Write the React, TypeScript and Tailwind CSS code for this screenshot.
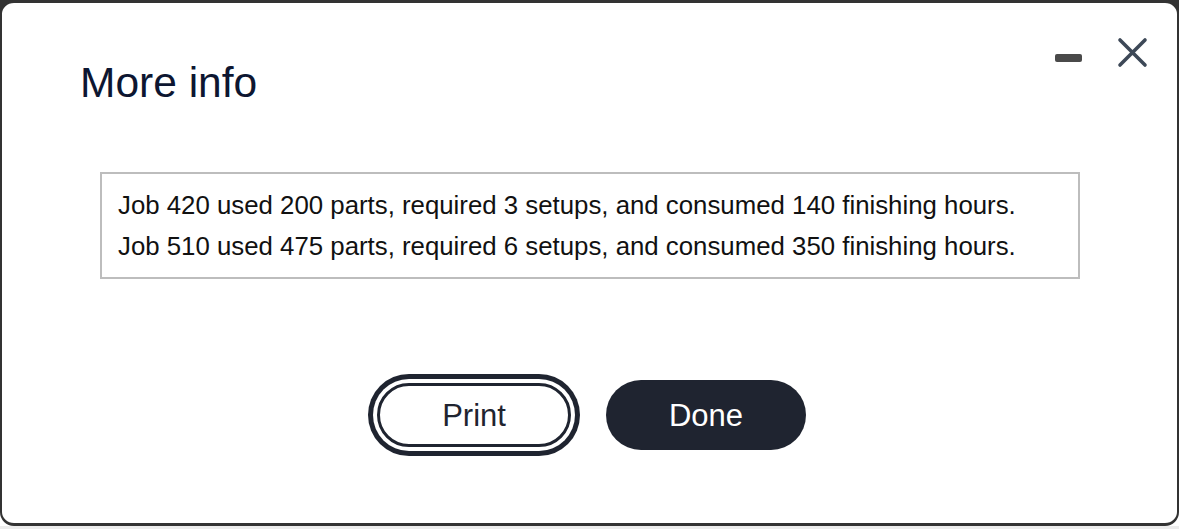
const rows = [
  'Job 420 used 200 parts, required 3 setups, and consumed 140 finishing hours.',
  'Job 510 used 475 parts, required 6 setups, and consumed 350 finishing hours.',
]

function CloseIcon() {
  return (
    <svg width="31" height="31" viewBox="0 0 31 31" fill="none">
      <path d="M3 3L28 28M28 3L3 28" stroke="#3d4857" strokeWidth="3.6" strokeLinecap="round" />
    </svg>
  )
}

function App() {
  return (
    <div
      className="w-[1179px] h-[529px] overflow-hidden bg-[linear-gradient(to_bottom,#333_0px,#333_16px,#fff_16px,#fff_526px,#ececec_526px)]"
      style={{ fontFamily: '"Liberation Sans", Arial, Helvetica, sans-serif' }}
    >
      <div className="h-[526px] bg-white border-t-[3px] border-b-[3px] border-x-2 border-[#333] rounded-[14px] flex flex-col">
        {/* header */}
        <div className="flex justify-between items-start">
          <h1 className="mt-[59px] ml-[78px] text-[42.5px] leading-none font-normal text-[#0d1631]">
            More info
          </h1>
          <div className="flex items-center gap-[35px] mt-[34px] mr-[29px]">
            <div className="w-[27px] h-[8px] mt-[10px] rounded-[2px] bg-[#4a4a4a]" />
            <CloseIcon />
          </div>
        </div>

        {/* info box */}
        <div className="ml-[98px] w-[980px] mt-[67px] border-2 border-[#bdbdbd] pt-[11px] pb-[10px] pl-[16px]">
          {rows.map((r) => (
            <p key={r} className="text-[25.8px] leading-[41px] text-[#111]">
              {r}
            </p>
          ))}
        </div>

        {/* buttons */}
        <div className="mt-[101px] h-[70px] flex items-center justify-center gap-[35px] pl-[4px]">
          <button className="w-[194px] h-[64px] pt-[3px] rounded-full border-[3px] border-[#1f2430] bg-white text-[31px] text-[#1f2430] shadow-[0_0_0_4px_#fff,0_0_0_9px_#1f2430]">
            Print
          </button>
          <button className="w-[200px] h-[70px] pt-[3px] rounded-full bg-[#1f2430] text-[31px] text-white">
            Done
          </button>
        </div>
      </div>
    </div>
  )
}

export default App
